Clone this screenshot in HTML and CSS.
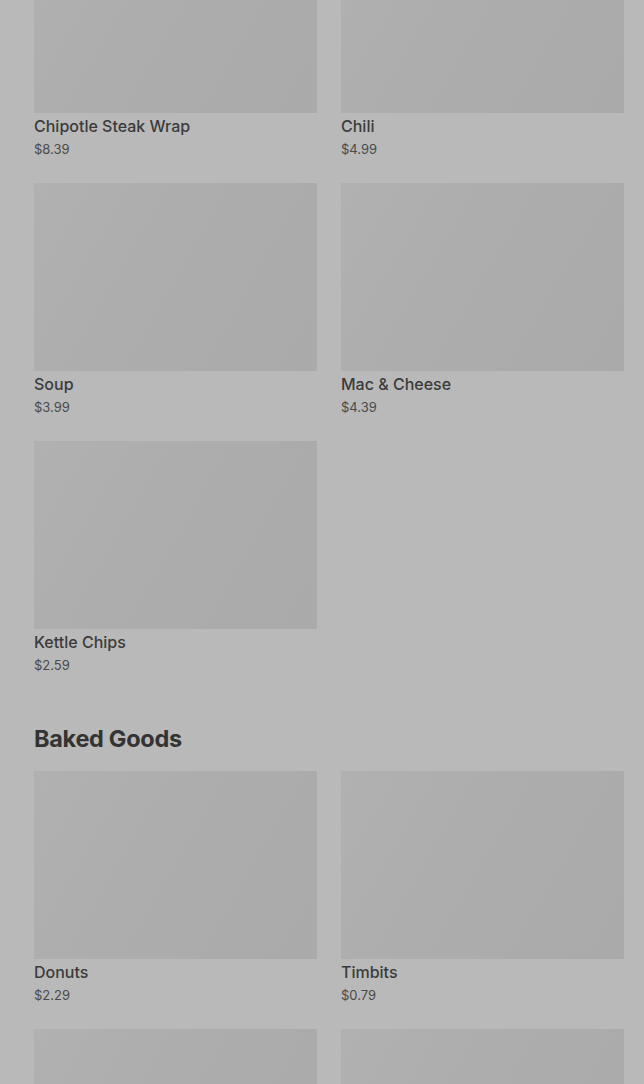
FILE: index.html
```html
<!DOCTYPE html>
<html lang="en">

<head>
    <meta name="viewport" content="width=device-width, initial-scale=1.0">
    <title>Menu</title>
    <link rel="stylesheet" href="styles.css">
</head>

<body>
    <div class="menu">
        <section class="category first">
            <div class="items">
                <div class="item">
                    <div class="thumb"></div>
                    <div class="name">Chipotle Steak Wrap</div>
                    <div class="price">$8.39</div>
                </div>
                <div class="item">
                    <div class="thumb"></div>
                    <div class="name">Chili</div>
                    <div class="price">$4.99</div>
                </div>
                <div class="item">
                    <div class="thumb"></div>
                    <div class="name">Soup</div>
                    <div class="price">$3.99</div>
                </div>
                <div class="item">
                    <div class="thumb"></div>
                    <div class="name">Mac &amp; Cheese</div>
                    <div class="price">$4.39</div>
                </div>
                <div class="item">
                    <div class="thumb"></div>
                    <div class="name">Kettle Chips</div>
                    <div class="price">$2.59</div>
                </div>
            </div>
        </section>

        <section class="category">
            <h2 class="category-title">Baked Goods</h2>
            <div class="items">
                <div class="item">
                    <div class="thumb"></div>
                    <div class="name">Donuts</div>
                    <div class="price">$2.29</div>
                </div>
                <div class="item">
                    <div class="thumb"></div>
                    <div class="name">Timbits</div>
                    <div class="price">$0.79</div>
                </div>
                <div class="item">
                    <div class="thumb"></div>
                    <div class="name">Muffins</div>
                    <div class="price">$1.89</div>
                </div>
                <div class="item">
                    <div class="thumb"></div>
                    <div class="name">Croissant</div>
                    <div class="price">$2.49</div>
                </div>
            </div>
        </section>
    </div>
</body>

</html>
```

FILE: styles.css
```css
html,
body {
    margin: 0;
    background: #b9b9b9;
    font-family: Inter, "Noto Sans", sans-serif;
    color: #3a3a3a;
    height: 100%;
    overflow: hidden;
}

.menu {
    padding: 0 20px 0 34px;
    margin-top: -75px;
}

.category {
    margin-top: 49px;
}

.category.first {
    margin-top: 0;
}

.category-title {
    margin: 0 0 16px 0;
    font-size: 23.5px;
    line-height: 32px;
    font-weight: 700;
    letter-spacing: -0.3px;
    color: #333;
}

.items {
    display: grid;
    grid-template-columns: 1fr 1fr;
    column-gap: 24px;
    row-gap: 25px;
}

.thumb {
    height: 188px;
    background: linear-gradient(120deg, #b1b1b1 0%, #adadad 40%, #aaaaaa 100%);
}

.name {
    margin-top: 3px;
    font-size: 16px;
    line-height: 20px;
    font-weight: 500;
    color: #3b3b3b;
}

.price {
    margin-top: 4px;
    font-size: 13px;
    line-height: 18px;
    color: #4a4a4a;
}
```
